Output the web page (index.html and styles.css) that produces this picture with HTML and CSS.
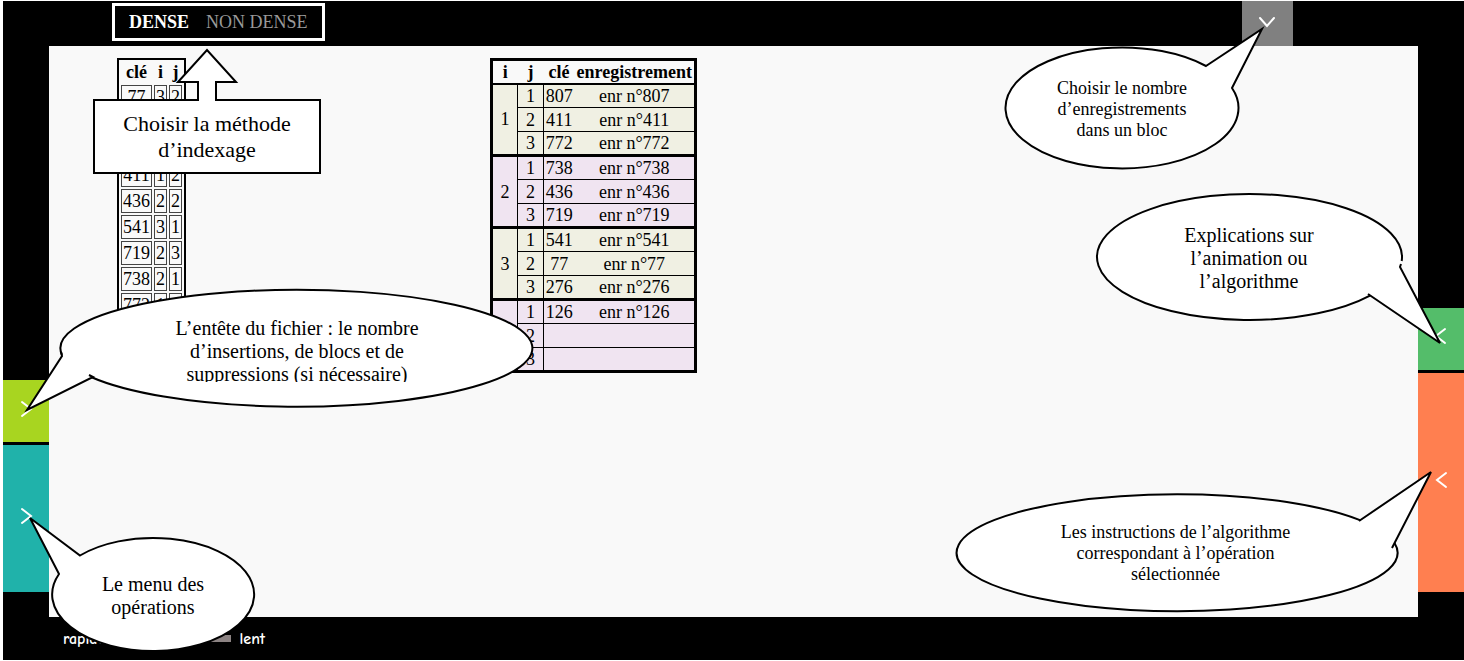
FILE: index.html
```html
<!DOCTYPE html>
<html lang="fr">
<head>
<meta charset="utf-8">
<title>Indexage</title>
<link rel="stylesheet" href="styles.css">
</head>
<body>
<div class="app">
  <header class="topbar">
    <nav class="modes" aria-label="Méthode d’indexage">
      <button type="button" class="mode mode-active">DENSE</button>
      <button type="button" class="mode">NON DENSE</button>
    </nav>
    <button type="button" class="tab tab-grey" aria-label="Nombre d’enregistrements">
      <svg width="20" height="14" viewBox="0 0 20 14"><path d="M2 3 L9 11 L16 3"/></svg>
    </button>
  </header>

  <div class="middle">
    <div class="rail">
      <button type="button" class="tab tab-lime" aria-label="Entête du fichier">
        <svg width="14" height="20" viewBox="0 0 14 20"><path d="M3 3 L12 10 L3 17"/></svg>
      </button>
      <button type="button" class="tab tab-teal" aria-label="Opérations">
        <svg width="14" height="20" viewBox="0 0 14 20"><path d="M3 2 L12 9 L3 16"/></svg>
      </button>
    </div>

    <main class="stage">
      <table class="index">
        <thead><tr><th>clé</th><th>i</th><th>j</th></tr></thead>
        <tbody>
          <tr><td>77</td><td>3</td><td>2</td></tr>
          <tr><td>126</td><td>4</td><td>1</td></tr>
          <tr><td>276</td><td>3</td><td>3</td></tr>
          <tr><td>411</td><td>1</td><td>2</td></tr>
          <tr><td>436</td><td>2</td><td>2</td></tr>
          <tr><td>541</td><td>3</td><td>1</td></tr>
          <tr><td>719</td><td>2</td><td>3</td></tr>
          <tr><td>738</td><td>2</td><td>1</td></tr>
          <tr><td>772</td><td>1</td><td>3</td></tr>
          <tr><td>807</td><td>1</td><td>1</td></tr>
        </tbody>
      </table>

      <table class="blocks">
        <colgroup><col class="col-i"><col class="col-j"><col class="col-key"><col class="col-rec"></colgroup>
        <thead><tr><th>i</th><th>j</th><th>clé</th><th>enregistrement</th></tr></thead>
        <tbody class="block-green">
          <tr><td rowspan="3" class="num">1</td><td class="num">1</td><td>807</td><td>enr n°807</td></tr>
          <tr><td class="num">2</td><td>411</td><td>enr n°411</td></tr>
          <tr><td class="num">3</td><td>772</td><td>enr n°772</td></tr>
        </tbody>
        <tbody class="block-pink">
          <tr><td rowspan="3" class="num">2</td><td class="num">1</td><td>738</td><td>enr n°738</td></tr>
          <tr><td class="num">2</td><td>436</td><td>enr n°436</td></tr>
          <tr><td class="num">3</td><td>719</td><td>enr n°719</td></tr>
        </tbody>
        <tbody class="block-green">
          <tr><td rowspan="3" class="num">3</td><td class="num">1</td><td>541</td><td>enr n°541</td></tr>
          <tr><td class="num">2</td><td>77</td><td>enr n°77</td></tr>
          <tr><td class="num">3</td><td>276</td><td>enr n°276</td></tr>
        </tbody>
        <tbody class="block-pink">
          <tr><td rowspan="3" class="num">4</td><td class="num">1</td><td>126</td><td>enr n°126</td></tr>
          <tr><td class="num">2</td><td></td><td></td></tr>
          <tr><td class="num">3</td><td></td><td></td></tr>
        </tbody>
      </table>
    </main>

    <div class="rail">
      <button type="button" class="tab tab-green" aria-label="Explications">
        <svg width="14" height="20" viewBox="0 0 14 20"><path d="M11 2 L2 9 L11 16"/></svg>
      </button>
      <button type="button" class="tab tab-orange" aria-label="Instructions">
        <svg width="14" height="20" viewBox="0 0 14 20"><path d="M12 2 L3 9 L12 16"/></svg>
      </button>
    </div>
  </div>

  <footer class="bottombar">
    <label for="speed">rapide</label>
    <input type="range" id="speed" class="speed" min="0" max="10" value="5">
    <span>lent</span>
  </footer>

  <div class="callout callout-method">
    <svg viewBox="92 48 230 127"><path d="M94 100 H198 V82 H178 L207 50 L236 82 H216 V100 H320 V173 H94 Z"/></svg>
    <p class="text-large">Choisir la méthode<br>d’indexage</p>
  </div>

  <div class="callout callout-count">
    <svg viewBox="1004 26 260 145"><path d="M1206 66 L1262 29 L1232 88 A116.5 60.5 0 1 1 1206 66 Z"/></svg>
    <p class="text-small">Choisir le nombre<br>d’enregistrements<br>dans un bloc</p>
  </div>

  <div class="callout callout-explain">
    <svg viewBox="1095 192 348 153">
      <path d="M1370 295.6 A152.5 63 0 1 1 1401.700 261"/>
      <path class="tail-fill" d="M1396 250 L1400 267 L1440 343 L1368 294 L1340 270 Z"/>
      <path class="tail-line" d="M1401 264 L1400 267 L1440 343 L1368 294"/>
    </svg>
    <p class="text-medium">Explications sur<br>l’animation ou<br>l’algorithme</p>
  </div>

  <div class="callout callout-instr">
    <svg viewBox="954 470 479 143">
      <path d="M1394.500 543 A220.5 58.5 0 1 1 1360 520.100"/>
      <path class="tail-fill" d="M1360 520 L1431 472 L1392 548 L1350 550 Z"/>
      <path class="tail-line" d="M1359 521 L1431 472 L1392 548"/>
    </svg>
    <p class="text-small">Les instructions de l’algorithme<br>correspondant à l’opération<br>sélectionnée</p>
  </div>

  <div class="callout callout-head">
    <svg viewBox="24 288 511 121">
      <path d="M62 355 A236 58.5 0 1 1 91 377"/>
      <path class="tail-fill" d="M62 355 L27 411 L93 376 L110 360 Z"/>
      <path class="tail-line" d="M61 352 L62 356 L27 410 L93 377 L89 375"/>
    </svg>
    <p class="text-medium">L’entête du fichier : le nombre<br>d’insertions, de blocs et de<br>suppressions (si nécessaire)</p>
  </div>

  <div class="callout callout-menu">
    <svg viewBox="28 515 228 138"><path d="M59 574 L30 518 L80 555.500 A101 56.5 0 1 1 59 574 Z"/></svg>
    <p class="text-medium">Le menu des<br>opérations</p>
  </div>
</div>
</body>
</html>
```
FILE: styles.css
```css
* { box-sizing: border-box; }

body {
  margin: 0;
  background: #fff;
  color: #000;
  font: 18px/20px "Liberation Serif", "Times New Roman", serif;
}

.app {
  position: relative;
  display: flex;
  flex-direction: column;
  min-height: 100vh;
  padding: 1px 0 1px 3px;
  overflow: hidden;
}

button {
  font: inherit;
  border: 0;
  padding: 0;
  cursor: pointer;
}

.topbar {
  display: flex;
  justify-content: space-between;
  height: 45px;
  padding: 0 171px 0 109px;
  background: #000;
}

.modes {
  display: flex;
  align-items: center;
  gap: 17px;
  height: 38px;
  margin-top: 2px;
  padding: 0 14px;
  border: 3px solid #fff;
}

.mode {
  background: none;
  color: #999;
}

.mode-active {
  color: #fff;
  font-weight: bold;
}

.tab {
  display: flex;
  align-items: center;
  justify-content: center;
  width: 100%;
  padding-bottom: 4px;
}

.tab svg {
  fill: none;
  stroke: #fff;
  stroke-width: 2;
  stroke-linecap: round;
}

.tab-grey { width: 51px; background: #808080; }
.tab-lime { height: 62px; background: #a8d520; }
.tab-teal { height: 147px; background: #20b2aa; }
.tab-green { height: 62px; background: #54bd6a; }
.tab-orange { height: 219px; background: #ff7f50; }

.middle {
  display: flex;
  flex: 1;
}

.rail {
  display: flex;
  flex-direction: column;
  justify-content: flex-end;
  gap: 3px;
  width: 46px;
  padding-bottom: 25px;
  background: #000;
}

.stage {
  display: flex;
  align-items: flex-start;
  flex: 1;
  gap: 304px;
  padding: 12px 68px;
  background: #f9f9f9;
}

.index {
  border: 2px solid #000;
  border-spacing: 2px;
  text-align: center;
}

.index th {
  padding: 0;
  line-height: 21px;
}

.index td {
  padding: 1px;
  border: 1px solid #444;
}

.blocks {
  width: 207px;
  table-layout: fixed;
  border: 3px solid #000;
  border-collapse: collapse;
  text-align: center;
}

.blocks .col-i { width: 26px; }
.blocks .col-j { width: 26px; }
.blocks .col-key { width: 31px; }

.blocks th,
.blocks td {
  height: 24px;
  padding: 0;
}

.blocks td { border-top: 1px solid #000; }
.blocks .num { border-right: 1px solid #000; }
.blocks tbody { border-top: 3px solid #000; }
.blocks thead + tbody { border-top-width: 2px; }
.block-green { background: #f0f0e3; }
.block-pink { background: #f0e4f1; }

.bottombar {
  display: flex;
  align-items: center;
  gap: 9px;
  height: 43px;
  padding-left: 60px;
  background: #000;
  color: #fff;
  font: bold 16px/20px "Comic Sans MS", "Comic Neue", "Open Sans", sans-serif;
}

.speed {
  width: 116px;
  height: 7px;
  margin: 0;
  appearance: none;
  background: #8c8383;
}

.callout {
  position: absolute;
  display: flex;
  justify-content: center;
}

.callout svg {
  position: absolute;
  inset: 0;
  width: 100%;
  height: 100%;
  overflow: visible;
  fill: #fff;
  stroke: #000;
  stroke-width: 2;
}

.callout .tail-fill { stroke: none; }
.callout .tail-line { fill: none; }

.callout p {
  position: relative;
  margin: 0;
  text-align: center;
  white-space: nowrap;
}

.text-small { font-size: 18px; line-height: 21px; }
.text-medium { font-size: 20px; line-height: 23px; }
.text-large { font-size: 22px; line-height: 26px; }

.callout-method { left: 92px; top: 48px; width: 230px; height: 127px; padding-top: 63px; }
.callout-count { right: 200px; top: 26px; width: 260px; height: 145px; padding: 52px 24px 0 0; }
.callout-explain { right: 21px; top: 192px; width: 348px; height: 153px; padding: 32px 40px 0 0; }
.callout-instr { right: 31px; top: 470px; width: 479px; height: 143px; padding: 52px 36px 0 0; }
.callout-head { left: 24px; top: 288px; width: 511px; height: 121px; padding: 29px 0 0 35px; }
.callout-head p { height: 65px; overflow: hidden; }
.callout-menu { left: 28px; top: 515px; width: 228px; height: 138px; padding: 58px 0 0 22px; }
```
